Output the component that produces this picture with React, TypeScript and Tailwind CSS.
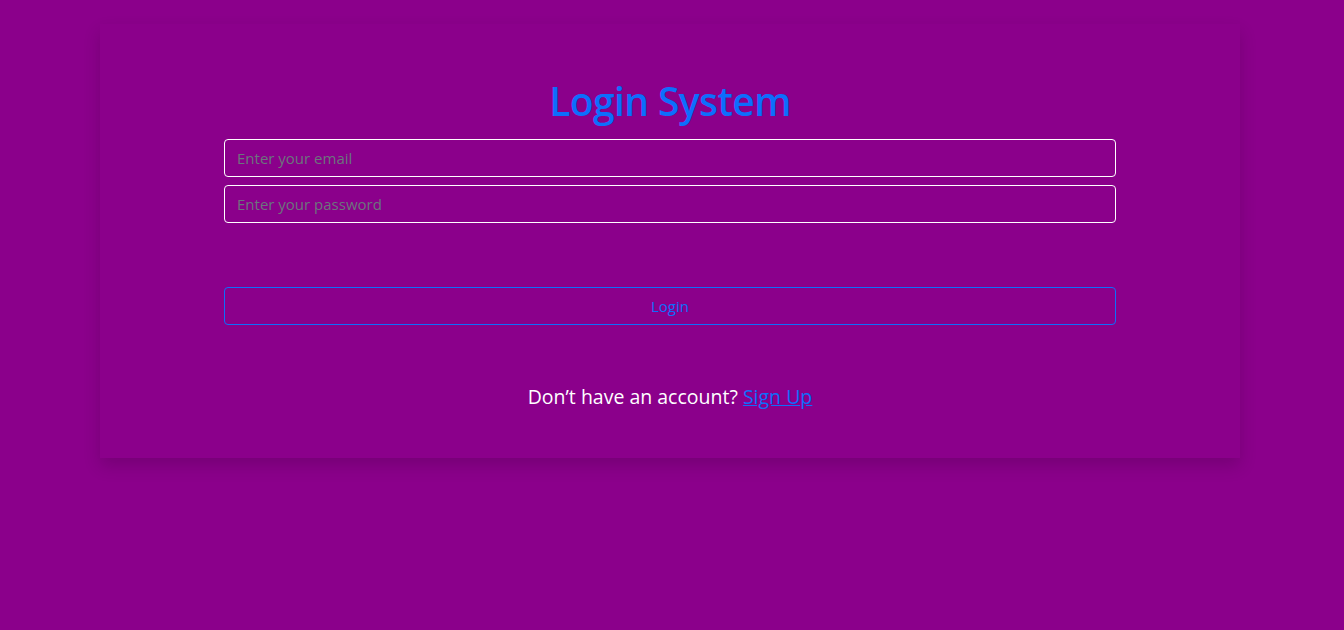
import React from "react";

export default function App() {
  return (
    <div
      className="min-h-[630px] w-full bg-[#8b008b] pt-6"
      style={{ fontFamily: '"Open Sans", "Noto Sans", sans-serif' }}
    >
      <div className="ml-[100px] w-[1140px] h-[434px] bg-[#8b008b] shadow-[0_8px_16px_rgba(0,0,0,0.15)] flex flex-col items-center pt-[53px]">
        <h1 className="text-[39px] leading-[48px] font-semibold text-[#0d6efd] tracking-[-0.6px]">
          Login System
        </h1>
        <div className="w-[892px] mt-[14px] flex flex-col gap-2">
          <input
            type="email"
            placeholder="Enter your email"
            className="h-[38px] w-full rounded-[4px] border border-white bg-transparent px-3 text-[15px] text-white placeholder:text-[#6c757d] outline-none"
          />
          <input
            type="password"
            placeholder="Enter your password"
            className="h-[38px] w-full rounded-[4px] border border-white bg-transparent px-3 text-[15px] text-white placeholder:text-[#6c757d] outline-none"
          />
        </div>
        <button className="mt-16 h-[38px] w-[892px] rounded-[4px] border border-[#0d6efd] bg-transparent text-[15px] text-[#0d6efd]">
          Login
        </button>
        <p className="mt-[57px] text-[19.5px] leading-[30px] text-white">
          Don’t have an account?{" "}
          <a href="#" className="text-[#0d6efd] underline">
            Sign Up
          </a>
        </p>
      </div>
    </div>
  );
}
